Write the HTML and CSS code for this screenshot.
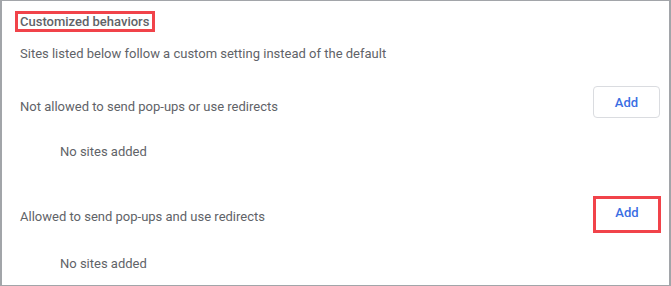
FILE: index.html
```html
<!DOCTYPE html>
<html>
<head>
<meta charset="utf-8">
<link rel="stylesheet" href="styles.css">
</head>
<body>
<div class="frame">
  <div class="heading-wrap"><span class="heading">Customized behaviors</span></div>
  <div class="desc">Sites listed below follow a custom setting instead of the default</div>
  <div class="row row-first">
    <div class="label">Not allowed to send pop-ups or use redirects</div>
    <button class="add">Add</button>
  </div>
  <div class="empty empty-first">No sites added</div>
  <div class="row row-second">
    <div class="label label-second">Allowed to send pop-ups and use redirects</div>
    <button class="add add-marked">Add</button>
  </div>
  <div class="empty empty-second">No sites added</div>
</div>
</body>
</html>
```

FILE: styles.css
```css
html, body {
  margin: 0;
  padding: 0;
  background: #ffffff;
}
.frame {
  box-sizing: border-box;
  width: 671px;
  height: 286px;
  border: 1px solid #a2a5a9;
  border-left-width: 2px;
  border-right-width: 2px;
  padding: 10px 9px 0 18px;
  font-family: Roboto, "Liberation Sans", sans-serif;
  font-size: 13px;
  color: #5f6368;
  background: #fff;
}
.heading-wrap {
  height: 21px;
}
.heading {
  display: inline-block;
  box-sizing: border-box;
  height: 21px;
  margin-left: -5px;
  padding: 0 3px 0 2px;
  border: 3px solid #f1434a;
  line-height: 15px;
  font-weight: 500;
  color: #5f6368;
}
.desc {
  margin-top: 12px;
  line-height: 20px;
}
.row {
  display: flex;
  align-items: center;
  justify-content: space-between;
}
.row-first {
  margin-top: 22px;
  height: 32px;
}
.label {
  line-height: 20px;
  padding-top: 9px;
}
.label-second {
  padding-top: 5px;
}
.add {
  box-sizing: border-box;
  width: 67px;
  height: 32px;
  border: 1px solid #dadce0;
  border-radius: 4px;
  background: #fff;
  font-family: Roboto, "Liberation Sans", sans-serif;
  font-size: 13px;
  font-weight: 500;
  color: #3a6ee3;
  padding: 0;
  margin: 0;
}
.add-marked {
  width: 68px;
  height: 37px;
  border: 3px solid #f1434a;
  border-radius: 0;
  padding-bottom: 4px;
  margin-right: -1px;
}
.empty {
  padding-left: 40px;
  line-height: 20px;
}
.empty-first {
  margin-top: 24px;
}
.row-second {
  margin-top: 34px;
  height: 37px;
}
.empty-second {
  margin-top: 21px;
}
```
